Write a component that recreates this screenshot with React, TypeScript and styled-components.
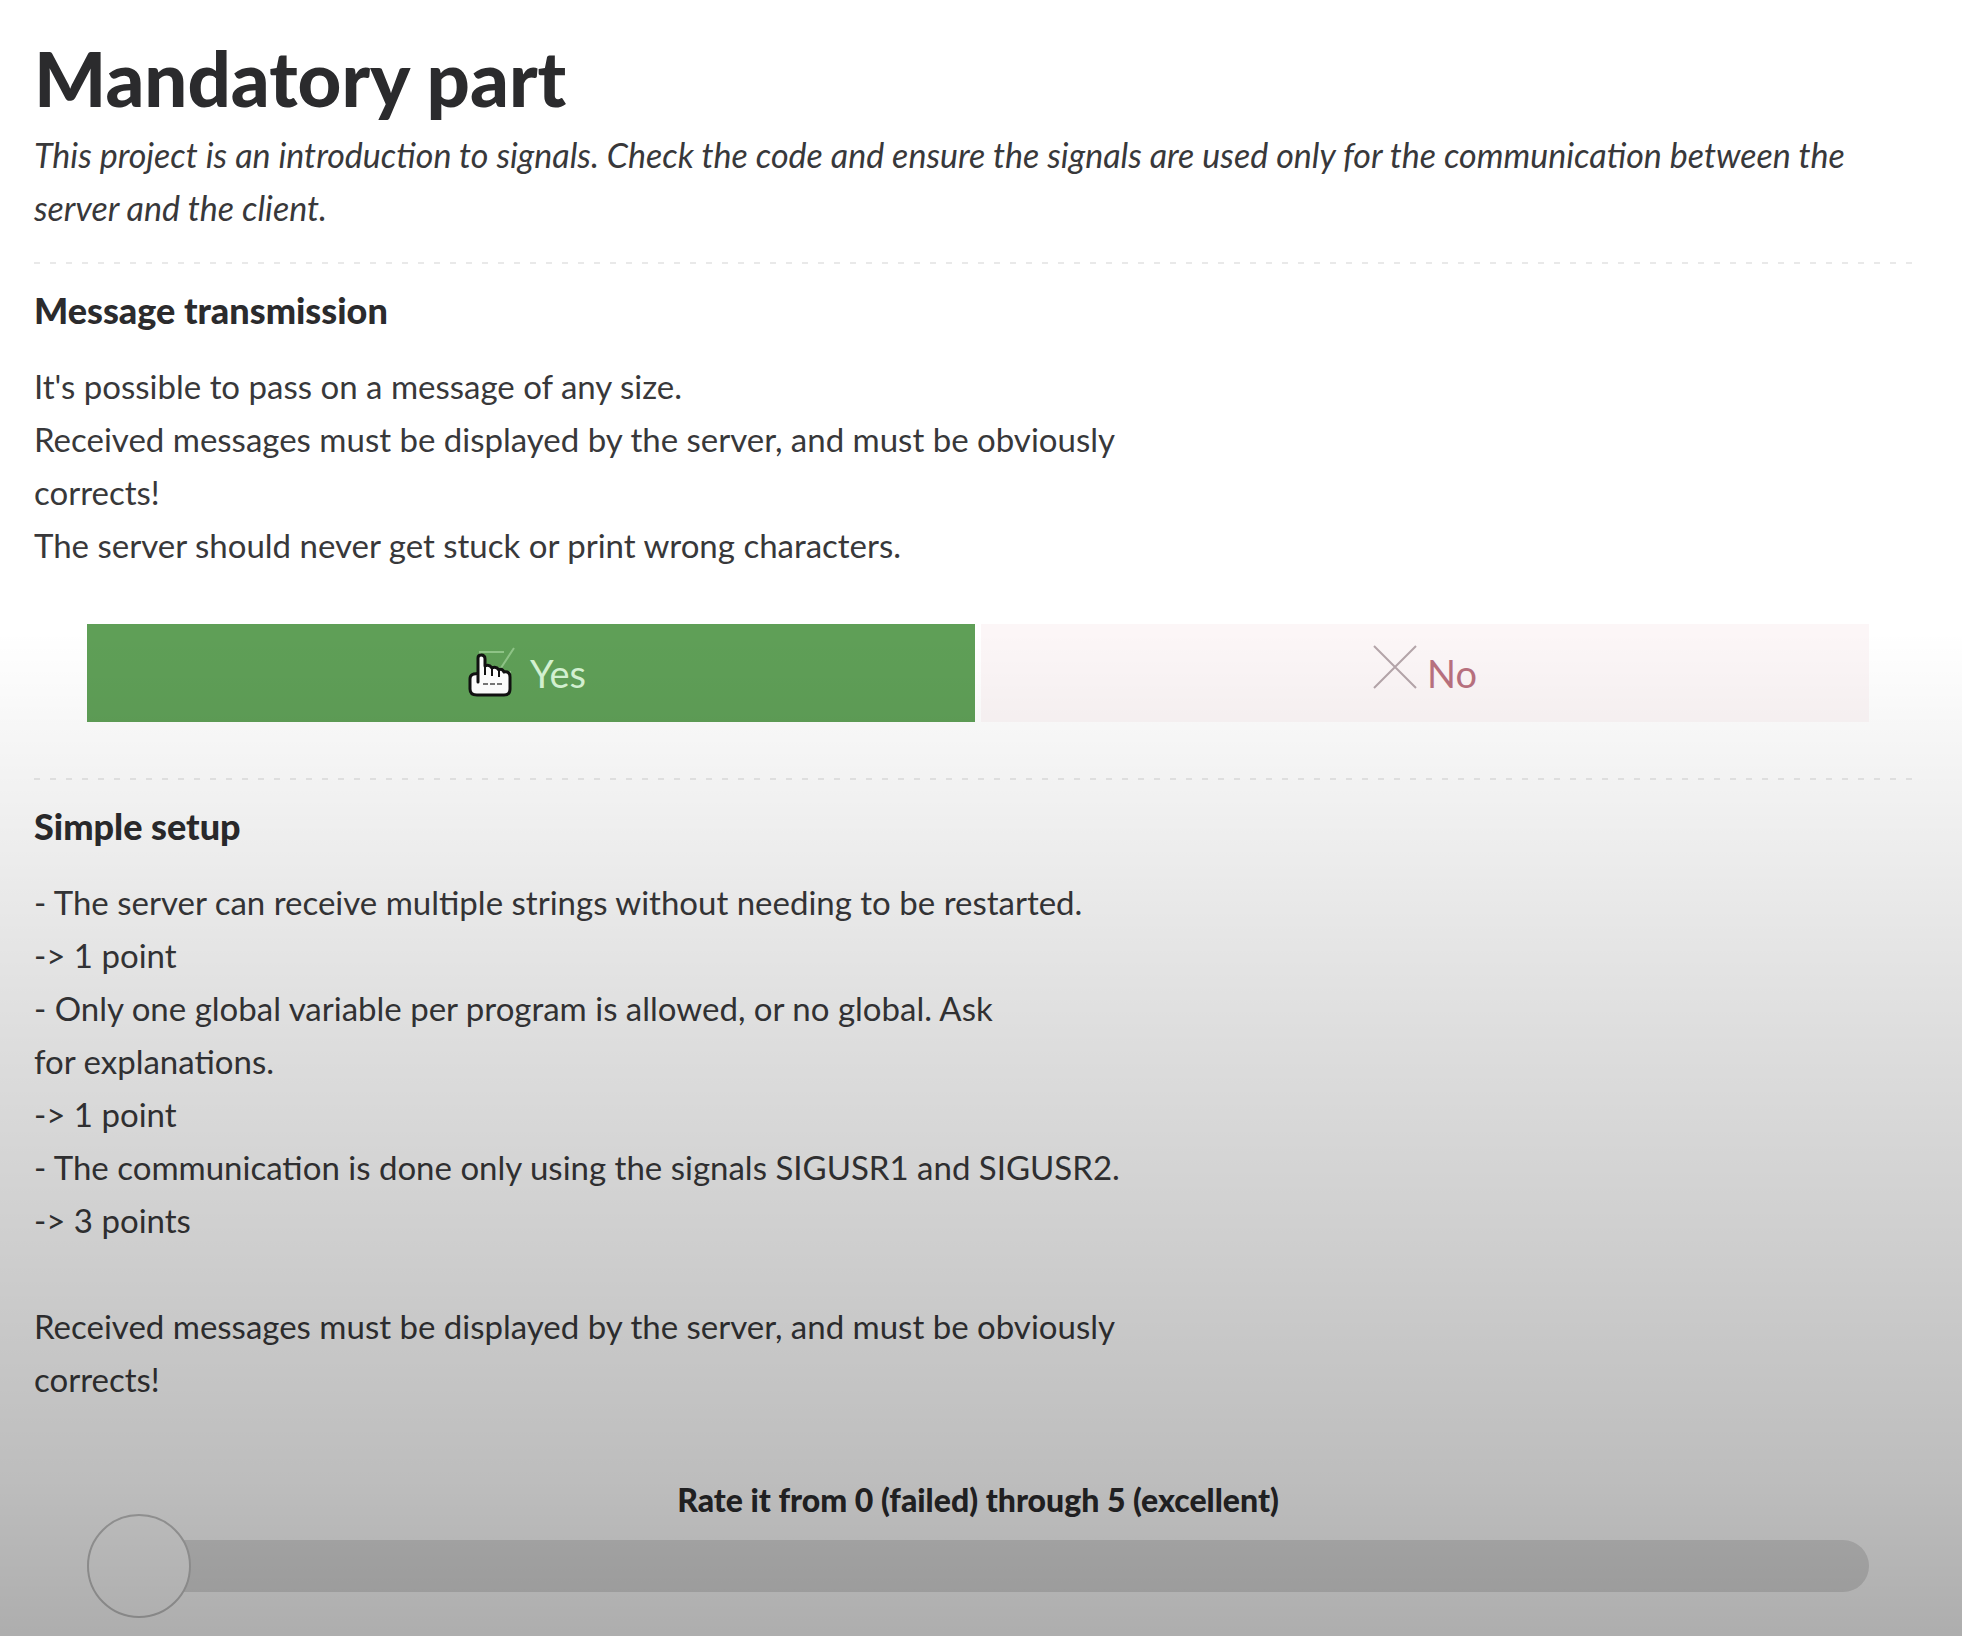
import React, { useState } from "react";
import styled, { createGlobalStyle, css } from "styled-components";

const GlobalStyle = createGlobalStyle`
  *, *::before, *::after { box-sizing: border-box; }
  body {
    margin: 0;
    background: #fff;
    color: #2b2b2d;
    font-family: Futura, "Futura PT", Lato, sans-serif;
  }
`;

const Page = styled.main`
  position: relative;
  min-height: 100vh;
  padding: 36px 40px 16px 34px;
`;

const Shade = styled.div`
  position: absolute;
  inset: 0;
  pointer-events: none;
  background: linear-gradient(
    to bottom,
    rgba(0, 0, 0, 0) 38%,
    rgba(0, 0, 0, 0.04) 45%,
    rgba(0, 0, 0, 0.13) 62%,
    rgba(0, 0, 0, 0.26) 89%,
    rgba(0, 0, 0, 0.33) 100%
  );
`;

const Title = styled.h1`
  margin: 0 0 8px;
  font-size: 76px;
  line-height: 84px;
  font-weight: 900;
`;

const Intro = styled.p`
  margin: 0 0 28px;
  color: #38383a;
  font-size: 34px;
  line-height: 53px;
  font-style: italic;
`;

const Section = styled.section`
  padding: 22px 0 28px;
  background: linear-gradient(to right, #e9e9e9 6px, transparent 6px) 0 0 / 16px 2px repeat-x;
`;

const SectionTitle = styled.h2`
  margin: 0 0 24px;
  font-size: 36px;
  line-height: 52px;
  font-weight: 900;
`;

const Guidelines = styled.p`
  margin: 0;
  color: #38383a;
  font-size: 33px;
  line-height: 53px;
  white-space: pre-line;
`;

const Answers = styled.div`
  display: grid;
  grid-template-columns: 1fr 1fr;
  gap: 6px;
  margin: 52px 53px 28px;
`;

const Answer = styled.button<{ $tone: "yes" | "no" }>`
  display: flex;
  align-items: center;
  justify-content: center;
  gap: 10px;
  height: 98px;
  padding: 0;
  border: 0;
  font-family: inherit;
  font-size: 38px;
  cursor: pointer;
  ${({ $tone }) =>
    $tone === "yes"
      ? css`background: #5f9f57; color: #d5f3d3;`
      : css`background: #fcf6f7; color: #b9717f;`}
`;

const IconBox = styled.span`
  position: relative;
  display: flex;
  margin-bottom: 12px;
`;

const Pointer = styled.svg`
  position: absolute;
  left: -8px;
  top: 8px;
`;

const Rating = styled.div`
  display: flex;
  flex-direction: column;
  margin: 80px 53px 0;
`;

const RatingLabel = styled.label`
  font-size: 32px;
  line-height: 28px;
  font-weight: 900;
  text-align: center;
`;

const Slider = styled.input`
  appearance: none;
  width: 100%;
  height: 104px;
  margin: 0;
  background: transparent;
  &::-webkit-slider-runnable-track {
    height: 52px;
    border-radius: 26px;
    background: #e0e0e0;
  }
  &::-webkit-slider-thumb {
    appearance: none;
    width: 104px;
    height: 104px;
    margin-top: -26px;
    border: 2px solid #c4c4c4;
    border-radius: 50%;
    background: #fff;
  }
`;

export default function App() {
  const [rate, setRate] = useState(0);
  return (
    <Page>
      <GlobalStyle />
      <Title>Mandatory part</Title>
      <Intro>
        This project is an introduction to signals. Check the code and ensure the signals are used only for the communication between the server and the client.
      </Intro>
      <Section>
        <SectionTitle>Message transmission</SectionTitle>
        <Guidelines>
          {`It's possible to pass on a message of any size.
Received messages must be displayed by the server, and must be obviously
corrects!
The server should never get stuck or print wrong characters.`}
        </Guidelines>
        <Answers>
          <Answer type="button" $tone="yes">
            <IconBox>
              <svg width="44" height="44" viewBox="0 0 44 44" fill="none" stroke="#8fc487" strokeWidth="2">
                <path d="M28 7H4V40H34V26M12 20L21 29L38 3" />
              </svg>
              <Pointer width="44" height="44" viewBox="0 0 44 44">
                <path
                  d="M10 29V5Q10 2 13 2Q17 2 17 6V13Q21 11 24 15Q28 13 31 17Q34 15 36 19Q42 18 42 24V36Q42 42 36 42H9Q2 42 2 36V26Q2 20 10 21Z"
                  fill="#fff"
                  stroke="#111"
                  strokeWidth="3"
                  strokeLinejoin="round"
                />
                <path d="M17 13V22M24 15V23M31 17V24" stroke="#111" strokeWidth="2" />
                <path d="M15 31H34" stroke="#777" strokeWidth="2" strokeDasharray="5 2" />
              </Pointer>
            </IconBox>
            Yes
          </Answer>
          <Answer type="button" $tone="no">
            <IconBox>
              <svg width="44" height="44" viewBox="0 0 44 44" fill="none" stroke="#b5a5aa" strokeWidth="2">
                <path d="M1 1L43 43M43 1L1 43" />
              </svg>
            </IconBox>
            No
          </Answer>
        </Answers>
      </Section>
      <Section>
        <SectionTitle>Simple setup</SectionTitle>
        <Guidelines>
          {`- The server can receive multiple strings without needing to be restarted.
-> 1 point
- Only one global variable per program is allowed, or no global. Ask
for explanations.
-> 1 point
- The communication is done only using the signals SIGUSR1 and SIGUSR2.
-> 3 points

Received messages must be displayed by the server, and must be obviously
corrects!`}
        </Guidelines>
        <Rating>
          <RatingLabel htmlFor="rate">Rate it from 0 (failed) through 5 (excellent)</RatingLabel>
          <Slider id="rate" type="range" min={0} max={5} value={rate} onChange={(e) => setRate(Number(e.target.value))} />
        </Rating>
      </Section>
      <Shade />
    </Page>
  );
}
